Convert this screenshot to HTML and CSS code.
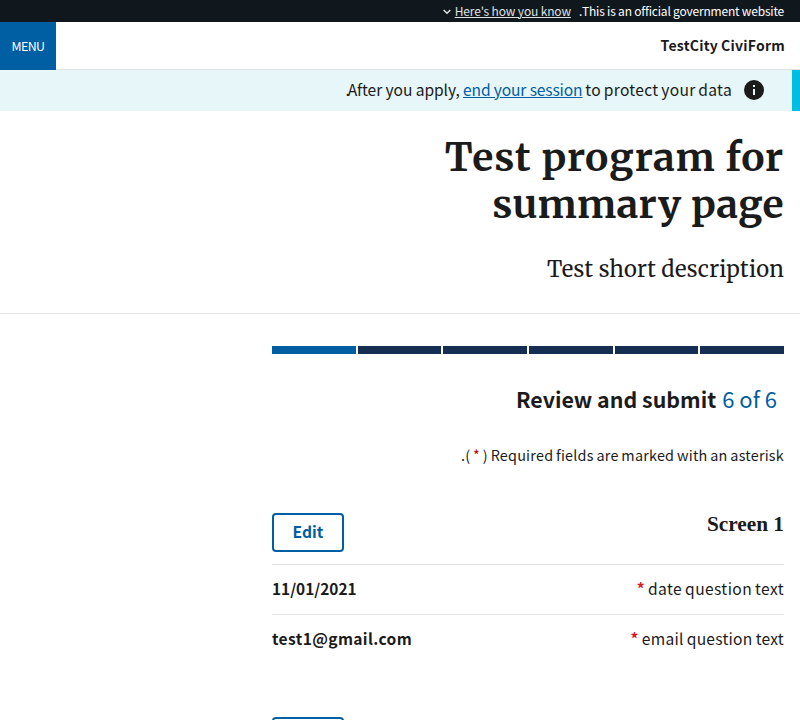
FILE: index.html
```html
<!DOCTYPE html>
<html lang="en" dir="rtl">
<head>
<meta charset="utf-8">
<title>Test program for summary page</title>
<link rel="stylesheet" href="styles.css">
</head>
<body>
<section class="banner">
  <span class="banner-text">This is an official government website.</span>
  <a class="banner-link" href="#">Here's how you know</a>
  <svg class="chevron" viewBox="0 0 8 6"><path d="M.7 1L4 4.3 7.3 1" fill="none" stroke="#dfe1e2" stroke-width="1.5"/></svg>
</section>
<header class="header">
  <span class="brand">TestCity CiviForm</span>
  <button class="menu">MENU</button>
</header>
<div class="alert">
  <svg class="info" viewBox="0 0 24 24"><path fill="#1b1b1b" d="M12 2a10 10 0 1 0 0 20 10 10 0 0 0 0-20zm1 15h-2v-6h2zm0-8h-2V7h2z"/></svg>
  <p class="alert-text"><span class="lead">After you apply, </span><a href="#">end your session</a><span class="tail"> to protect your data</span><span class="stop">.</span></p>
</div>
<section class="intro">
  <h1><span class="line-one">Test program for</span><br><span class="line-two">summary page</span></h1>
  <p>Test short description</p>
</section>
<main class="content">
  <div class="steps"><i></i><i></i><i></i><i></i><i></i><i class="current"></i></div>
  <h2 class="step-title"><span class="count" dir="ltr">6 of 6</span><span class="step-name">Review and submit</span></h2>
  <p class="required">Required fields are marked with an asterisk ( <b>*</b> ).</p>
  <section class="block">
    <div class="block-head"><h3>Screen 1</h3><button class="edit">Edit</button></div>
    <div class="row"><span class="question date">date question text <b>*</b></span><strong class="day">11/01/2021</strong></div>
    <div class="row"><span class="question email">email question text <b>*</b></span><strong class="mail">test1@gmail.com</strong></div>
  </section>
  <section class="block next"><button class="edit" aria-label="Edit"></button></section>
</main>
</body>
</html>
```
FILE: styles.css
```css
*{box-sizing:border-box}
body{margin:0;height:720px;overflow:hidden;background:#fff;color:#1b1b1b;font:15.6px/1.4 "Noto Sans CJK SC",sans-serif;white-space:nowrap}
h1,h2,h3,p{margin:0}
a{color:#005ea2;text-underline-offset:1px}
.banner{height:22px;background:#11181d;color:#fff;display:flex;align-items:center;padding:0 16px;font-size:12px}
.banner-text{letter-spacing:-.2px}
.banner-link{color:#dfe1e2;margin-right:8px;letter-spacing:-.15px}
.chevron{width:8px;height:6px;margin:1px 4px 0}
.header{height:48px;display:flex;align-items:center;justify-content:space-between;padding-right:15px;border-bottom:1px solid #dfe1e2}
.brand{font-weight:700;font-size:14px;letter-spacing:.24px;word-spacing:-.5px}
.menu{width:56px;height:48px;border:0;padding:0;background:#005ea2;color:#fff;font:12.4px "Noto Sans CJK SC",sans-serif;letter-spacing:-.6px}
.alert{height:41px;background:#e7f6f8;border-right:8px solid #00bde3;display:flex;align-items:center;padding-right:26px}
.info{width:24px;height:24px;margin:-2px 0 0 10px}
.alert-text{margin-top:-2px}
.lead{letter-spacing:-.08px}
.alert a{letter-spacing:-.14px}
.tail{letter-spacing:.3px;word-spacing:-1px}
.stop{letter-spacing:-2px}
.intro{height:203px;padding:23px 16px 0;border-bottom:1px solid #dfe1e2;font-family:Merriweather,"Liberation Serif",serif}
h1{font-size:39px;line-height:47px}
.line-one{letter-spacing:.75px}
.line-two{letter-spacing:.33px}
.intro p{font-size:22px;line-height:32px;margin-top:25px;letter-spacing:.2px}
.content{width:512px;height:374px;margin:32px 16px 0 0}
.steps{display:flex;gap:2px;height:8px}
.steps i{flex:1;background:#162e51}
.steps .current{background:#005ea2}
.step-title{display:flex;gap:6px;padding-right:7px;margin-top:27px;height:36px;align-items:baseline;line-height:34px;font-size:21.4px}
.count{color:#005ea2;font-weight:400;font-size:22px}
.required{margin-top:28px;height:24px;font-size:14.4px;letter-spacing:.22px;word-spacing:-.7px}
.required b,.question b{color:#b50909}
.required b{font-weight:400}
.question b{color:#d8191f}
.block{margin-top:44px}
.block-head{display:flex;justify-content:space-between;height:51px}
h3{font:700 21.3px/22px "Liberation Serif",serif}
.edit{display:block;width:72px;height:39px;padding:0 0 3px;background:#fff;border:2px solid #005ea2;border-radius:4px;color:#005ea2;font:700 15.6px "Noto Sans CJK SC",sans-serif}
.row{height:50px;padding-bottom:2px;border-top:1px solid #dfe1e2;display:flex;align-items:center;justify-content:space-between}
.date{letter-spacing:.38px;word-spacing:-.8px}
.email{letter-spacing:.24px;word-spacing:-.6px}
.day{font-size:15.4px}
.mail{letter-spacing:.35px}
.next{width:72px;height:3px;margin:53px auto 0 0;overflow:hidden}
```
